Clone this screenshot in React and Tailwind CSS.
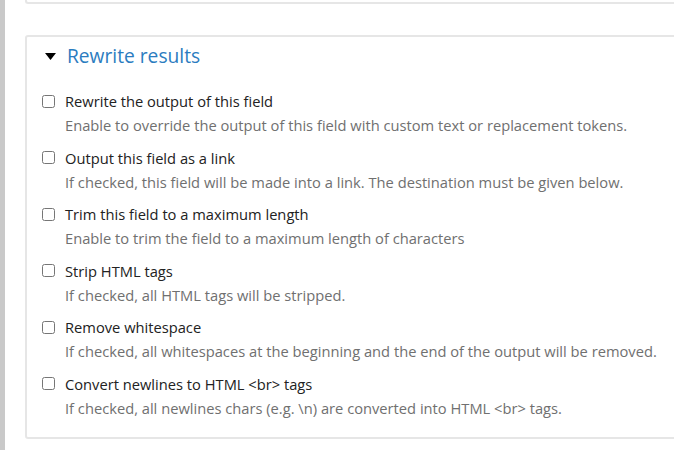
const options = [
  {
    label: 'Rewrite the output of this field',
    help: 'Enable to override the output of this field with custom text or replacement tokens.',
  },
  {
    label: 'Output this field as a link',
    help: 'If checked, this field will be made into a link. The destination must be given below.',
  },
  {
    label: 'Trim this field to a maximum length',
    help: 'Enable to trim the field to a maximum length of characters',
  },
  {
    label: 'Strip HTML tags',
    help: 'If checked, all HTML tags will be stripped.',
  },
  {
    label: 'Remove whitespace',
    help: 'If checked, all whitespaces at the beginning and the end of the output will be removed.',
  },
  {
    label: 'Convert newlines to HTML <br> tags',
    help: 'If checked, all newlines chars (e.g. \\n) are converted into HTML <br> tags.',
  },
];

function App() {
  return (
    <div
      className="flex h-[450px] w-[674px] overflow-hidden bg-white"
      style={{ fontFamily: '"Open Sans", "Liberation Sans", sans-serif' }}
    >
      <div className="w-[5px] shrink-0 bg-[#c9c9c9]" />
      <div className="flex-1 pl-[20px]">
        <div className="h-[4px] -mr-4 rounded-b-[3px] border-b-2 border-l-2 border-[#e6e6e6]" />
        <fieldset className="mt-[31px] -mr-4 h-[404px] rounded-[3px] border-2 border-[#e6e6e6] pl-[15px] pt-[7px]">
          <div className="flex h-[24px] items-center">
            <svg width="11" height="7" viewBox="0 0 11 7" className="ml-[3px] mr-[11px]">
              <path d="M0 0 L11 0 L5.5 7 Z" fill="#000" />
            </svg>
            <span className="text-[19.2px] text-[#2b7cc0]">Rewrite results</span>
          </div>
          <div className="mt-[22px]">
            {options.map((o) => (
              <div key={o.label} className="h-[56.6px]">
                <label className="flex h-[22px] items-center">
                  <input type="checkbox" className="m-0 h-[13px] w-[13px]" />
                  <span className="ml-[10px] text-[14.7px] text-[#222]">{o.label}</span>
                </label>
                <div className="ml-[23px] mt-[3px] text-[14.7px] leading-[20px] text-[#707070]">{o.help}</div>
              </div>
            ))}
          </div>
        </fieldset>
      </div>
    </div>
  );
}

export default App;
